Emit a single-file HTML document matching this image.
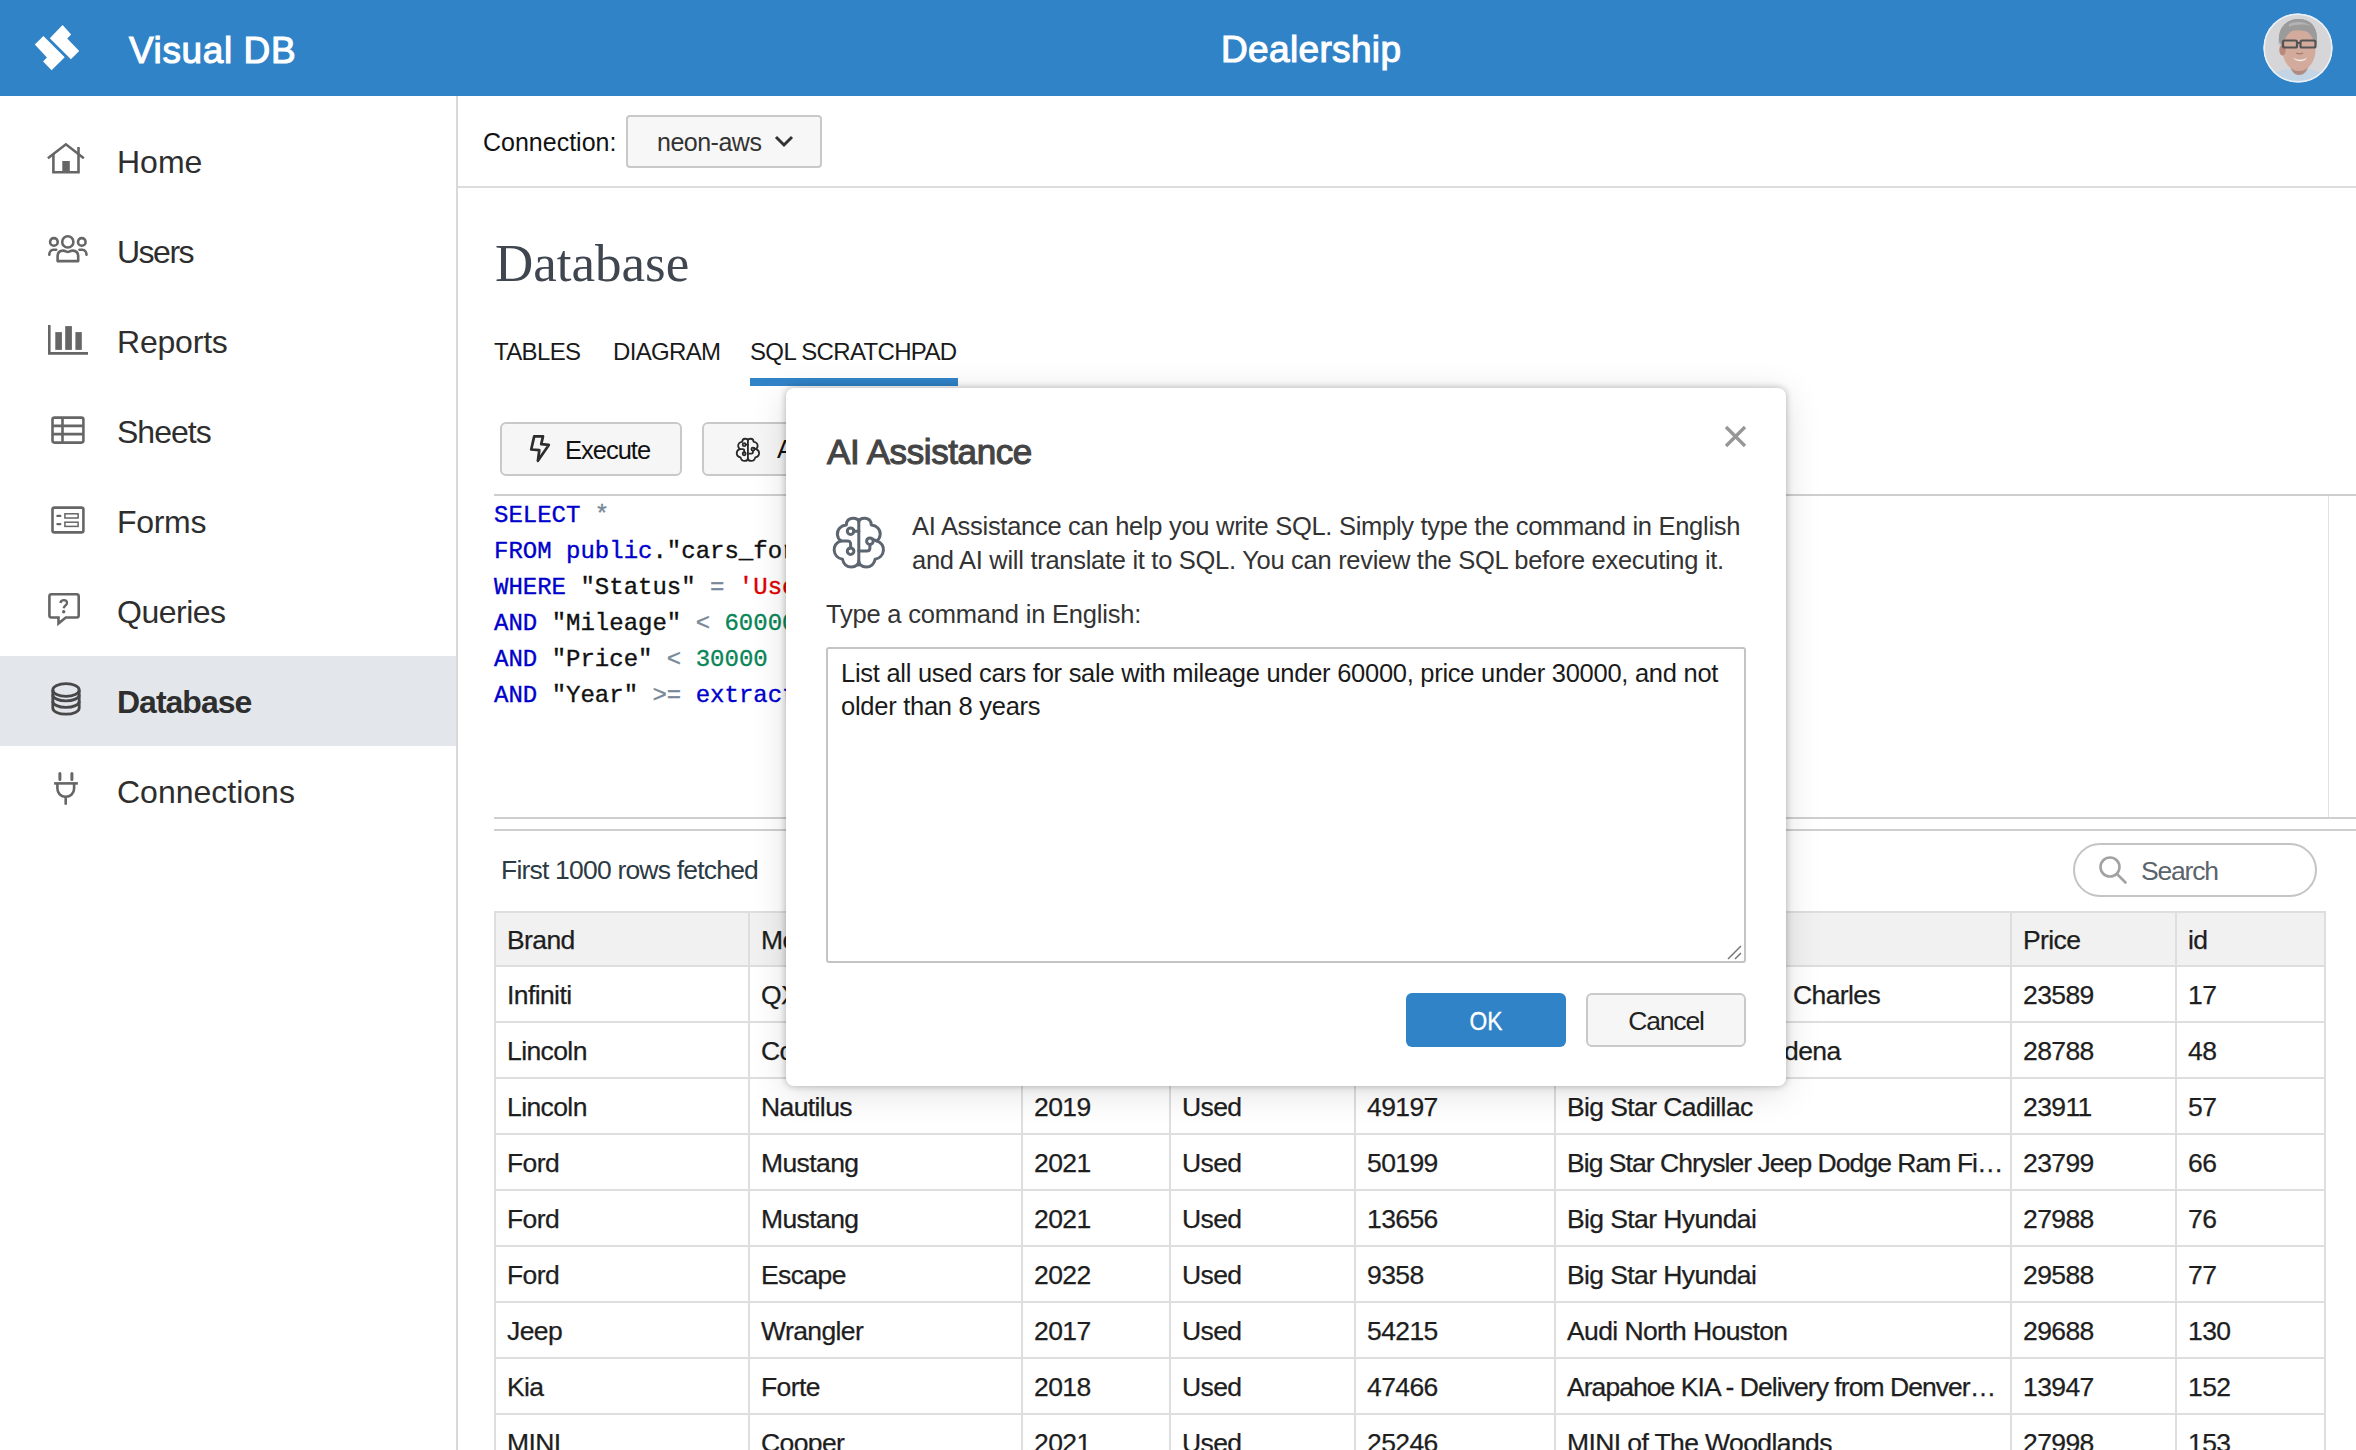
<!DOCTYPE html>
<html><head><meta charset="utf-8">
<style>
*{box-sizing:border-box;margin:0;padding:0}
html,body{width:2356px;height:1450px;overflow:hidden;background:#fff}
body{position:relative;font-family:"Liberation Sans",sans-serif;color:#222}
.a{position:absolute;white-space:nowrap;line-height:1}
.ico{position:absolute;left:0}
.nav{font-size:32px;color:#2e2e2e}
.mono{font-family:"Liberation Mono",monospace;font-size:24px;color:#111;-webkit-text-stroke:0.35px currentColor}
.kw{color:#0000cc}.op{color:#778899}.str{color:#e00000}.num{color:#098658}.id{color:#111}
.hl{position:absolute;background:#dedede}
.td{font-size:26.5px;color:#1e1e1e;text-overflow:ellipsis;letter-spacing:-0.6px;-webkit-text-stroke:0.25px #1e1e1e}
.btn{position:absolute;background:#f6f6f6;border:2px solid #c9c9c9;border-radius:6px}
</style></head><body>

<div class="a" style="left:0;top:0;width:2356px;height:96px;background:#3183c8"></div>
<svg class="ico" style="top:0" width="100" height="96" viewBox="0 0 100 96">
<polygon fill="#fff" points="62.6,25 71.2,34.5 67.2,38.5 79.2,50.9 70.9,59.2 49.8,38.3"/>
<polygon fill="#fff" points="43.4,36 64.7,57.3 51.6,70.2 43.1,61.5 46.9,57.5 34.8,44.5"/>
</svg>
<div class="a" style="left:129px;top:31.7px;font-size:37px;color:#fff;-webkit-text-stroke:1.1px #fff;letter-spacing:0.6px">Visual DB</div>
<div class="a" style="left:1221px;top:30.5px;font-size:37px;color:#fff;-webkit-text-stroke:1.1px #fff;letter-spacing:0.35px">Dealership</div>
<svg width="70" height="70" viewBox="0 0 70 70" style="position:absolute;left:2263px;top:13px">
<defs><clipPath id="cc"><circle cx="35" cy="35" r="33.5"/></clipPath></defs>
<circle cx="35" cy="35" r="34.6" fill="#e9eff6"/>
<g clip-path="url(#cc)">
<rect width="70" height="70" fill="#d6d6d8"/>
<path d="M4,70 C8,61 16,57 26,56 L44,56 C54,57 62,61 66,70 Z" fill="#c3d4e4"/>
<path d="M26,50 C28,58 31,62 36,62 C41,62 45,58 46,50 Z" fill="#b08c80"/>
<ellipse cx="35" cy="24" rx="19" ry="18" fill="#9b9b9b"/>
<ellipse cx="36" cy="37" rx="16.5" ry="21" fill="#d2ab9c"/>
<ellipse cx="19.5" cy="37" rx="3.2" ry="5.5" fill="#b98a7c"/>
<path d="M16,33 C14,16 23,6 36,6 C49,6 56,15 53,33 C52,26 51,21 46,19 C40,17 30,17 24,19 C19,21 17,26 16,33 Z" fill="#9b9b9b"/>
<path d="M26,11 C32,8 42,8 48,13 C42,11 32,11 26,14 Z" fill="#b4b4b4"/>
<rect x="20" y="27.5" width="14" height="7" rx="1.5" fill="none" stroke="#545454" stroke-width="2.2"/>
<rect x="37.5" y="27.5" width="15" height="7" rx="1.5" fill="none" stroke="#545454" stroke-width="2.2"/>
<path d="M34,30 H37.5" stroke="#545454" stroke-width="2"/>
<path d="M30,44.5 C34,47.5 40,47.5 44,44.5 C42,49.5 33,49.5 30,44.5 Z" fill="#f4eeea"/>
<path d="M33,40 C35,41 38,41 40,40" stroke="#a8786a" stroke-width="1.2" fill="none"/>
</g>
<circle cx="35" cy="35" r="33.8" fill="none" stroke="#eaf0f6" stroke-width="1.4"/>
</svg>

<!-- sidebar -->
<div class="a" style="left:0;top:656px;width:456px;height:90px;background:#e3e7eb"></div>
<div class="a" style="left:456px;top:96px;width:2px;height:1354px;background:#d9d9d9"></div>

<svg class="ico" width="100" height="900" viewBox="0 96 100 900" style="top:96px" fill="none" stroke="#666" stroke-width="2.6">
 <!-- home -->
 <path d="M48.9,157.5 L65.9,144.3 L82.8,157.5" stroke-linecap="square"/>
 <path d="M53.4,154 V172.2 H78.5 V147"/>
 <rect x="62.3" y="161" width="7.5" height="11.5" fill="#666" stroke="none"/>
 <!-- users -->
 <circle cx="67.8" cy="241.9" r="5.6"/>
 <circle cx="53.9" cy="241.9" r="3.8"/>
 <circle cx="81.8" cy="241.9" r="3.8"/>
 <path d="M57.6,261.1 V256.5 C57.6,252 60,250.6 63,250.6 C65.5,250.6 66,252 67.8,252 C69.6,252 70,250.6 72.6,250.6 C75.6,250.6 78.2,252 78.2,256.5 V261.1 Z" stroke-linejoin="round"/>
 <path d="M56.2,249.8 H53.5 C50.5,249.8 49.3,252.5 49.3,254.8" stroke-linecap="round"/>
 <path d="M79.5,249.8 H82.2 C85.2,249.8 86.5,252.5 86.5,254.8" stroke-linecap="round"/>
 <!-- reports -->
 <path d="M49.3,325 V353.4 H88" stroke-width="2.6"/>
 <rect x="55.3" y="332.1" width="6.6" height="17.8" fill="#666" stroke="none"/>
 <rect x="65.2" y="326.1" width="6.7" height="23.8" fill="#666" stroke="none"/>
 <rect x="75.4" y="332.1" width="6.4" height="17.8" fill="#666" stroke="none"/>
 <!-- sheets -->
 <rect x="52.5" y="417.6" width="30.9" height="25" rx="2"/>
 <path d="M62.5,417.6 V442.6 M52.5,425.9 H83.4 M52.5,434.1 H83.4"/>
 <!-- forms -->
 <rect x="52.5" y="507.6" width="30.9" height="24.8" rx="2"/>
 <path d="M57.5,515.9 H60.2 M57.5,524.1 H60.2" stroke-linecap="round" stroke-width="2.4"/>
 <rect x="64.9" y="513.8" width="13.2" height="4.2" stroke-width="1.5"/>
 <rect x="64.9" y="522.2" width="13.2" height="4.2" stroke-width="1.5"/>
 <!-- queries -->
 <path d="M51.5,594.3 H76.6 Q78.7,594.3 78.7,596.4 V615.3 Q78.7,617.5 76.6,617.5 H65.8 L58.5,623.5 V617.5 H51.5 Q49.4,617.5 49.4,615.3 V596.4 Q49.4,594.3 51.5,594.3 Z" stroke-linejoin="miter"/>
 <path d="M60.4,603 C60.8,600.8 62.3,600.2 63.9,600.2 C65.6,600.2 67,601.3 67,603 C67,605.2 64.3,605.5 63.6,608.2" stroke-width="2.3"/>
 <circle cx="63.7" cy="611.8" r="1.7" fill="#666" stroke="none"/>
 <!-- database -->
 <g stroke="#484848" stroke-width="2.8"><ellipse cx="66" cy="690" rx="13.2" ry="6.3"/>
 <path d="M52.8,690 V708 C52.8,711.5 58.7,714.2 66,714.2 C73.3,714.2 79.2,711.5 79.2,708 V690"/>
 <path d="M52.8,696 C52.8,699.5 58.7,702.2 66,702.2 C73.3,702.2 79.2,699.5 79.2,696" transform="translate(0,-1.3)"/>
 <path d="M52.8,702 C52.8,705.5 58.7,708.2 66,708.2 C73.3,708.2 79.2,705.5 79.2,702" transform="translate(0,-0.8)"/>
 </g>
 <!-- connections -->
 <path d="M59.9,773.5 V779.5 M71.9,773.5 V779.5" stroke-linecap="round" stroke-width="3"/>
 <path d="M54.1,783.4 H77.9"/>
 <path d="M57.4,783.4 V788.5 C57.4,793.5 61,796.8 65.7,796.8 C70.4,796.8 74.1,793.5 74.1,788.5 V783.4"/>
 <path d="M65.7,796.8 V804.7"/>
</svg>

<div class="a nav" style="left:117px;top:146.0px;font-weight:normal;letter-spacing:0px">Home</div>
<div class="a nav" style="left:117px;top:236.0px;font-weight:normal;letter-spacing:-1.5px">Users</div>
<div class="a nav" style="left:117px;top:326.0px;font-weight:normal;letter-spacing:-0.2px">Reports</div>
<div class="a nav" style="left:117px;top:416.0px;font-weight:normal;letter-spacing:-1px">Sheets</div>
<div class="a nav" style="left:117px;top:506.0px;font-weight:normal;letter-spacing:-0.3px">Forms</div>
<div class="a nav" style="left:117px;top:596.0px;font-weight:normal;letter-spacing:-0.5px">Queries</div>
<div class="a nav" style="left:117px;top:686.0px;font-weight:bold;letter-spacing:-1px">Database</div>
<div class="a nav" style="left:117px;top:776.0px;font-weight:normal;letter-spacing:0px">Connections</div>

<!-- connection bar -->
<div class="a" style="left:458px;top:186px;width:1898px;height:2px;background:#dcdcdc"></div>
<div class="a" style="left:483px;top:129.8px;font-size:25px;color:#111">Connection:</div>
<div class="btn" style="left:626px;top:115px;width:196px;height:53px;border-radius:4px;background:#f7f7f7"></div>
<div class="a" style="left:657px;top:129.8px;font-size:25px;color:#333;letter-spacing:-0.5px">neon-aws</div>
<svg class="ico" style="left:774px;top:134px" width="20" height="14" viewBox="0 0 20 14" fill="none" stroke="#333" stroke-width="3"><path d="M2,3 L10,11 L18,3"/></svg>

<div class="a" style="left:495px;top:237.0px;font-family:'Liberation Serif',serif;font-size:53px;color:#3f4650">Database</div>

<div class="a" style="left:494px;top:340.4px;font-size:24px;color:#1a1a1a;letter-spacing:-0.65px">TABLES</div>
<div class="a" style="left:613px;top:340.4px;font-size:24px;color:#1a1a1a;letter-spacing:-0.65px">DIAGRAM</div>
<div class="a" style="left:750px;top:340.4px;font-size:24px;color:#1a1a1a;letter-spacing:-0.65px">SQL SCRATCHPAD</div>
<div class="a" style="left:750px;top:378px;width:208px;height:8px;background:#3183c8"></div>

<div class="btn" style="left:500px;top:422px;width:182px;height:54px"></div>
<div class="a" style="left:529px;top:434px"><svg width="24" height="30" viewBox="0 0 24 30" fill="none" stroke="#2d2d2d" stroke-width="2.7" stroke-linejoin="round" stroke-linecap="round">
<path d="M5.2,2.4 H14 L12.2,10.2 L19.8,10.9 L8.9,26.8 L10.3,16.2 L2.2,15.5 Z"/></svg></div>
<div class="a" style="left:565px;top:437.8px;font-size:25.5px;color:#111;letter-spacing:-1px">Execute</div>
<div class="btn" style="left:702px;top:422px;width:200px;height:54px"></div>
<div class="a" style="left:733px;top:435px;width:30px;height:30px"><svg width="30" height="30" viewBox="0 0 66 66" fill="none" stroke="#2a2a2a" stroke-width="4" stroke-linecap="round" stroke-linejoin="round">
<path d="M32.8,9.5 V55 M32.8,12 C32.8,9.5 30,8 26.5,8.3 C22.5,8.6 20.5,11.5 20.3,15 C15,15.5 11,19.5 11.4,24.5 C11.7,28 13.5,30 15,30.9 C10.5,32.5 8,36 8.2,40.5 C8.5,45 12,48.5 16.5,49.2 C17.5,54 21,57 25.5,57 C30,57 32.8,54 32.8,51"/>
<path d="M32.8,12 C32.8,9.5 35.6,8 39.1,8.3 C43.1,8.6 45.1,11.5 45.3,15 C50.6,15.5 54.6,19.5 54.2,24.5 C53.9,28 52.1,30 50.6,30.9 C55.1,32.5 57.6,36 57.4,40.5 C57.1,45 53.6,48.5 49.1,49.2 C48.1,54 44.6,57 40.1,57 C35.6,57 32.8,54 32.8,51"/>
<circle cx="24.6" cy="21.2" r="3.3"/><path d="M27.9,21.2 H32.8"/>
<circle cx="24.6" cy="41.2" r="3.3"/><path d="M24.6,37.9 V34 C24.6,32 23.5,30.9 21.5,30.9 H15"/>
<circle cx="43.9" cy="31.2" r="3.3"/><path d="M43.9,34.5 V38 C43.9,40 42.8,41 40.8,41 H32.8 M46.3,29 L50.6,30.9"/>
</svg></div>
<div class="a" style="left:777px;top:437.4px;font-size:25.5px;color:#111">AI Assistance</div>

<!-- editor -->
<div class="a" style="left:494px;top:494px;width:1862px;height:2px;background:#cfcfcf"></div>
<div class="a" style="left:2328px;top:496px;width:1px;height:321px;background:#e2e2e2"></div>
<div class="a" style="left:494px;top:817px;width:1862px;height:2px;background:#cfcfcf"></div>
<div class="a" style="left:494px;top:829px;width:1862px;height:2px;background:#cfcfcf"></div>
<div class="a mono" style="left:494px;top:503.6px"><span class="kw">SELECT</span> <span class="op">*</span></div>
<div class="a mono" style="left:494px;top:539.6px"><span class="kw">FROM</span> <span class="kw">public</span><span class="id">."cars_for_sale"</span></div>
<div class="a mono" style="left:494px;top:575.6px"><span class="kw">WHERE</span> <span class="id">"Status"</span> <span class="op">=</span> <span class="str">'Used'</span></div>
<div class="a mono" style="left:494px;top:611.6px"><span class="kw">AND</span> <span class="id">"Mileage"</span> <span class="op">&lt;</span> <span class="num">60000</span></div>
<div class="a mono" style="left:494px;top:647.6px"><span class="kw">AND</span> <span class="id">"Price"</span> <span class="op">&lt;</span> <span class="num">30000</span></div>
<div class="a mono" style="left:494px;top:683.6px"><span class="kw">AND</span> <span class="id">"Year"</span> <span class="op">&gt;=</span> <span class="kw">extract</span><span class="id">(</span><span class="kw">year</span> <span class="kw">from</span> <span class="kw">current_date</span><span class="id">)</span> <span class="op">-</span> <span class="num">8</span></div>

<div class="a" style="left:501px;top:857.2px;font-size:26.5px;color:#2c3a44;letter-spacing:-0.8px">First 1000 rows fetched</div>
<div class="a" style="left:2073px;top:843px;width:244px;height:54px;border:2px solid #c4c4c4;border-radius:27px"></div>
<svg class="ico" style="left:2097px;top:854px" width="32" height="32" viewBox="0 0 32 32" fill="none" stroke="#a2a2a2" stroke-width="2.6"><circle cx="13" cy="13" r="9.5"/><path d="M20,20 L28.5,28.5" stroke-linecap="round"/></svg>
<div class="a" style="left:2141px;top:857.5px;font-size:26.5px;color:#5b636b;letter-spacing:-1.2px">Search</div>

<div class="a" style="left:494px;top:912px;width:1830px;height:54px;background:#f1f1f1"></div>
<div class="hl" style="left:494px;top:911px;width:1831px;height:2px"></div>
<div class="hl" style="left:494px;top:965px;width:1831px;height:2px"></div>
<div class="hl" style="left:494px;top:1021px;width:1831px;height:2px"></div>
<div class="hl" style="left:494px;top:1077px;width:1831px;height:2px"></div>
<div class="hl" style="left:494px;top:1133px;width:1831px;height:2px"></div>
<div class="hl" style="left:494px;top:1189px;width:1831px;height:2px"></div>
<div class="hl" style="left:494px;top:1245px;width:1831px;height:2px"></div>
<div class="hl" style="left:494px;top:1301px;width:1831px;height:2px"></div>
<div class="hl" style="left:494px;top:1357px;width:1831px;height:2px"></div>
<div class="hl" style="left:494px;top:1413px;width:1831px;height:2px"></div>
<div class="hl" style="left:494px;top:1469px;width:1831px;height:2px"></div>
<div class="hl" style="left:494px;top:911px;width:2px;height:600px"></div>
<div class="hl" style="left:748px;top:911px;width:2px;height:600px"></div>
<div class="hl" style="left:1021px;top:911px;width:2px;height:600px"></div>
<div class="hl" style="left:1169px;top:911px;width:2px;height:600px"></div>
<div class="hl" style="left:1354px;top:911px;width:2px;height:600px"></div>
<div class="hl" style="left:1554px;top:911px;width:2px;height:600px"></div>
<div class="hl" style="left:2010px;top:911px;width:2px;height:600px"></div>
<div class="hl" style="left:2175px;top:911px;width:2px;height:600px"></div>
<div class="hl" style="left:2324px;top:911px;width:2px;height:600px"></div>
<div class="a td" style="left:507px;top:926.5px">Brand</div>
<div class="a td" style="left:761px;top:926.5px">Model</div>
<div class="a td" style="left:1034px;top:926.5px">Year</div>
<div class="a td" style="left:1182px;top:926.5px">Status</div>
<div class="a td" style="left:1367px;top:926.5px">Mileage</div>
<div class="a td" style="left:1567px;top:926.5px">Dealer</div>
<div class="a td" style="left:2023px;top:926.5px">Price</div>
<div class="a td" style="left:2188px;top:926.5px">id</div>
<div class="a td" style="left:507px;top:981.8px">Infiniti</div>
<div class="a td" style="left:761px;top:981.8px">QX50</div>
<div class="a td" style="left:1034px;top:981.8px">2019</div>
<div class="a td" style="left:1182px;top:981.8px">Used</div>
<div class="a td" style="left:1367px;top:981.8px">41203</div>
<div class="a td" style="left:2023px;top:981.8px">23589</div>
<div class="a td" style="left:2188px;top:981.8px">17</div>
<div class="a td" style="left:507px;top:1037.8px">Lincoln</div>
<div class="a td" style="left:761px;top:1037.8px">Corsair</div>
<div class="a td" style="left:1034px;top:1037.8px">2020</div>
<div class="a td" style="left:1182px;top:1037.8px">Used</div>
<div class="a td" style="left:1367px;top:1037.8px">38521</div>
<div class="a td" style="left:2023px;top:1037.8px">28788</div>
<div class="a td" style="left:2188px;top:1037.8px">48</div>
<div class="a td" style="left:507px;top:1093.8px">Lincoln</div>
<div class="a td" style="left:761px;top:1093.8px">Nautilus</div>
<div class="a td" style="left:1034px;top:1093.8px">2019</div>
<div class="a td" style="left:1182px;top:1093.8px">Used</div>
<div class="a td" style="left:1367px;top:1093.8px">49197</div>
<div class="a td" style="left:1567px;top:1093.8px">Big Star Cadillac</div>
<div class="a td" style="left:2023px;top:1093.8px">23911</div>
<div class="a td" style="left:2188px;top:1093.8px">57</div>
<div class="a td" style="left:507px;top:1149.8px">Ford</div>
<div class="a td" style="left:761px;top:1149.8px">Mustang</div>
<div class="a td" style="left:1034px;top:1149.8px">2021</div>
<div class="a td" style="left:1182px;top:1149.8px">Used</div>
<div class="a td" style="left:1367px;top:1149.8px">50199</div>
<div class="a td" style="left:1567px;top:1149.8px;letter-spacing:-0.95px">Big Star Chrysler Jeep Dodge Ram Fi…</div>
<div class="a td" style="left:2023px;top:1149.8px">23799</div>
<div class="a td" style="left:2188px;top:1149.8px">66</div>
<div class="a td" style="left:507px;top:1205.8px">Ford</div>
<div class="a td" style="left:761px;top:1205.8px">Mustang</div>
<div class="a td" style="left:1034px;top:1205.8px">2021</div>
<div class="a td" style="left:1182px;top:1205.8px">Used</div>
<div class="a td" style="left:1367px;top:1205.8px">13656</div>
<div class="a td" style="left:1567px;top:1205.8px">Big Star Hyundai</div>
<div class="a td" style="left:2023px;top:1205.8px">27988</div>
<div class="a td" style="left:2188px;top:1205.8px">76</div>
<div class="a td" style="left:507px;top:1261.8px">Ford</div>
<div class="a td" style="left:761px;top:1261.8px">Escape</div>
<div class="a td" style="left:1034px;top:1261.8px">2022</div>
<div class="a td" style="left:1182px;top:1261.8px">Used</div>
<div class="a td" style="left:1367px;top:1261.8px">9358</div>
<div class="a td" style="left:1567px;top:1261.8px">Big Star Hyundai</div>
<div class="a td" style="left:2023px;top:1261.8px">29588</div>
<div class="a td" style="left:2188px;top:1261.8px">77</div>
<div class="a td" style="left:507px;top:1317.8px">Jeep</div>
<div class="a td" style="left:761px;top:1317.8px">Wrangler</div>
<div class="a td" style="left:1034px;top:1317.8px">2017</div>
<div class="a td" style="left:1182px;top:1317.8px">Used</div>
<div class="a td" style="left:1367px;top:1317.8px">54215</div>
<div class="a td" style="left:1567px;top:1317.8px">Audi North Houston</div>
<div class="a td" style="left:2023px;top:1317.8px">29688</div>
<div class="a td" style="left:2188px;top:1317.8px">130</div>
<div class="a td" style="left:507px;top:1373.8px">Kia</div>
<div class="a td" style="left:761px;top:1373.8px">Forte</div>
<div class="a td" style="left:1034px;top:1373.8px">2018</div>
<div class="a td" style="left:1182px;top:1373.8px">Used</div>
<div class="a td" style="left:1367px;top:1373.8px">47466</div>
<div class="a td" style="left:1567px;top:1373.8px;letter-spacing:-0.95px">Arapahoe KIA - Delivery from Denver…</div>
<div class="a td" style="left:2023px;top:1373.8px">13947</div>
<div class="a td" style="left:2188px;top:1373.8px">152</div>
<div class="a td" style="left:507px;top:1429.8px">MINI</div>
<div class="a td" style="left:761px;top:1429.8px">Cooper</div>
<div class="a td" style="left:1034px;top:1429.8px">2021</div>
<div class="a td" style="left:1182px;top:1429.8px">Used</div>
<div class="a td" style="left:1367px;top:1429.8px">25246</div>
<div class="a td" style="left:1567px;top:1429.8px">MINI of The Woodlands</div>
<div class="a td" style="left:2023px;top:1429.8px">27998</div>
<div class="a td" style="left:2188px;top:1429.8px">153</div>
<div class="a td" style="left:1793px;top:981.8px">Charles</div>
<div class="a td" style="left:1784px;top:1037.8px">dena</div>

<!-- modal -->
<div class="a" style="left:786px;top:388px;width:1000px;height:698px;background:#fff;border-radius:8px;box-shadow:0 0 7px rgba(0,0,0,.28),0 6px 36px rgba(0,0,0,.13)"></div>
<div class="a" style="left:827px;top:433.9px;font-size:35px;color:#444;-webkit-text-stroke:1.1px #444;letter-spacing:-0.4px">AI Assistance</div>
<svg class="ico" style="left:1722px;top:423px" width="27" height="27" viewBox="0 0 27 27" stroke="#979797" stroke-width="3.3"><path d="M4,4 L23,23 M23,4 L4,23"/></svg>
<div class="a" style="left:826px;top:510px"><svg width="66" height="66" viewBox="0 0 66 66" fill="none" stroke="#5d6570" stroke-width="3" stroke-linecap="round" stroke-linejoin="round">
<path d="M32.8,9.5 V55 M32.8,12 C32.8,9.5 30,8 26.5,8.3 C22.5,8.6 20.5,11.5 20.3,15 C15,15.5 11,19.5 11.4,24.5 C11.7,28 13.5,30 15,30.9 C10.5,32.5 8,36 8.2,40.5 C8.5,45 12,48.5 16.5,49.2 C17.5,54 21,57 25.5,57 C30,57 32.8,54 32.8,51"/>
<path d="M32.8,12 C32.8,9.5 35.6,8 39.1,8.3 C43.1,8.6 45.1,11.5 45.3,15 C50.6,15.5 54.6,19.5 54.2,24.5 C53.9,28 52.1,30 50.6,30.9 C55.1,32.5 57.6,36 57.4,40.5 C57.1,45 53.6,48.5 49.1,49.2 C48.1,54 44.6,57 40.1,57 C35.6,57 32.8,54 32.8,51"/>
<circle cx="24.6" cy="21.2" r="3.3"/><path d="M27.9,21.2 H32.8"/>
<circle cx="24.6" cy="41.2" r="3.3"/><path d="M24.6,37.9 V34 C24.6,32 23.5,30.9 21.5,30.9 H15"/>
<circle cx="43.9" cy="31.2" r="3.3"/><path d="M43.9,34.5 V38 C43.9,40 42.8,41 40.8,41 H32.8 M46.3,29 L50.6,30.9"/>
</svg></div>
<div class="a" style="left:912px;top:514.2px;font-size:25.5px;color:#333;letter-spacing:-0.29px">AI Assistance can help you write SQL. Simply type the command in English</div>
<div class="a" style="left:912px;top:547.8px;font-size:25.5px;color:#333;letter-spacing:-0.29px">and AI will translate it to SQL. You can review the SQL before executing it.</div>
<div class="a" style="left:826px;top:602.1px;font-size:25.5px;color:#333;letter-spacing:-0.2px">Type a command in English:</div>
<div class="a" style="left:826px;top:647px;width:920px;height:316px;border:2px solid #c4c4c4;border-radius:3px;background:#fff"></div>
<svg class="ico" style="left:1726px;top:944px" width="16" height="16" viewBox="0 0 16 16" stroke="#777" stroke-width="1.5"><path d="M2,15 L15,2 M9,15 L15,9"/></svg>
<div class="a" style="left:841px;top:660.8px;font-size:25.5px;color:#1a1a1a;letter-spacing:-0.27px">List all used cars for sale with mileage under 60000, price under 30000, and not</div>
<div class="a" style="left:841px;top:694.3px;font-size:25.5px;color:#1a1a1a;letter-spacing:-0.27px">older than 8 years</div>
<div class="a" style="left:1406px;top:993px;width:160px;height:54px;background:#3183c8;border-radius:6px"></div>
<div class="a" style="left:1406px;top:1007.9px;width:160px;text-align:center;font-size:26.5px;color:#fff;letter-spacing:0px;transform:scaleX(0.86);-webkit-text-stroke:0.3px #fff">OK</div>
<div class="btn" style="left:1586px;top:993px;width:160px;height:54px"></div>
<div class="a" style="left:1586px;top:1007.9px;width:160px;text-align:center;font-size:26.5px;color:#222;letter-spacing:-1.2px">Cancel</div>

</body></html>
